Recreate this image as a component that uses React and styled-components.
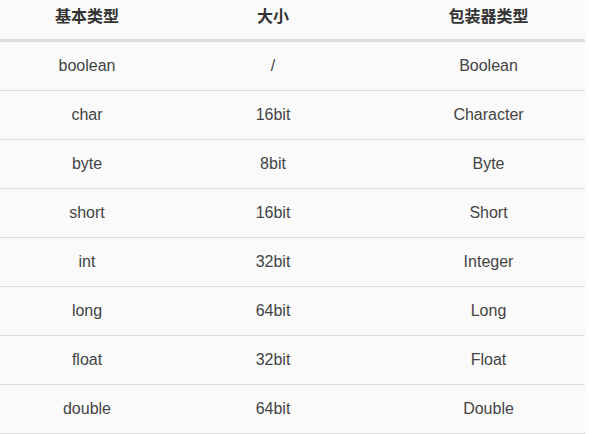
import React from 'react';
import styled, { createGlobalStyle } from 'styled-components';

const GlobalStyle = createGlobalStyle`
  html, body {
    margin: 0;
    padding: 0;
    background: #fdfdfd;
    overflow: hidden;
  }
`;

const rows = [
  ['boolean', '/', 'Boolean'],
  ['char', '16bit', 'Character'],
  ['byte', '8bit', 'Byte'],
  ['short', '16bit', 'Short'],
  ['int', '32bit', 'Integer'],
  ['long', '64bit', 'Long'],
  ['float', '32bit', 'Float'],
  ['double', '64bit', 'Double'],
];

const App = () => {
  return (
    <>
      <GlobalStyle />
      <Table>
        <HeadRow>
          <HeadCell>基本类型</HeadCell>
          <HeadCell>大小</HeadCell>
          <HeadCell $last>包装器类型</HeadCell>
        </HeadRow>
        {rows.map((r) => (
          <Row key={r[0]}>
            <Cell>{r[0]}</Cell>
            <Cell>{r[1]}</Cell>
            <Cell $last>{r[2]}</Cell>
          </Row>
        ))}
      </Table>
    </>
  );
};

const Table = styled.div`
  width: 585px;
  background: #fafafa;
  font-family: 'Liberation Sans', Arial, 'Noto Sans CJK SC', sans-serif;
`;

const HeadRow = styled.div`
  display: grid;
  grid-template-columns: 174px 198px 213px;
  height: 39px;
  border-bottom: 3px solid #dddddd;
  box-sizing: content-box;
`;

const HeadCell = styled.div`
  padding-top: 4px;
  padding-left: ${(p) => (p.$last ? '20px' : '0')};
  text-align: center;
  font-family: 'Noto Sans CJK SC', 'Liberation Sans', sans-serif;
  font-weight: 700;
  font-size: 16px;
  line-height: 22px;
  color: #333333;
`;

const Row = styled.div`
  display: grid;
  grid-template-columns: 174px 198px 213px;
  align-items: center;
  height: 48px;
  border-bottom: 1px solid #dddddd;
`;

const Cell = styled.div`
  padding-left: ${(p) => (p.$last ? '20px' : '0')};
  text-align: center;
  font-size: 16px;
  line-height: 20px;
  color: #444444;
`;

export default App;
